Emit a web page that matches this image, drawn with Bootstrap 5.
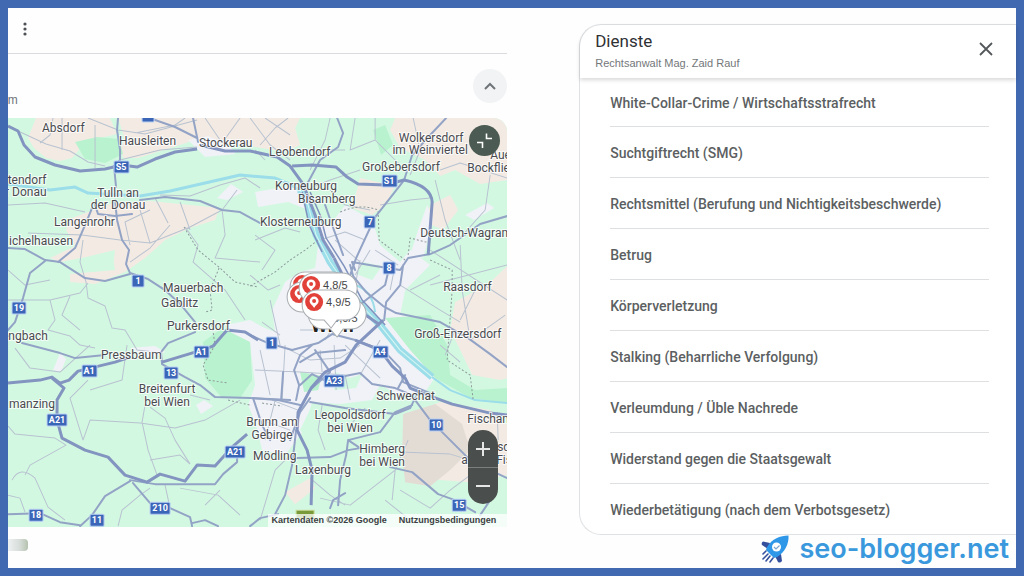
<!DOCTYPE html>
<html lang="de">
<head>
<meta charset="utf-8">
<meta name="viewport" content="width=device-width, initial-scale=1">
<title>Dienste – Rechtsanwalt Mag. Zaid Rauf</title>
<link href="https://cdn.jsdelivr.net/npm/bootstrap@5.3.0/dist/css/bootstrap.min.css" rel="stylesheet">
<style>
  body { font-family: Roboto, "Liberation Sans", sans-serif; color: #444746; }
  .frame { border: 8px solid #4169b1; min-height: 100vh; background: #fefefe; display: grid; grid-template-columns: 8fr 7fr; column-gap: 72px; }
  .frame > * { min-width: 0; }
  .topbar { height: 46px; border-bottom: 1px solid #d9dbde; padding-left: 7px; padding-bottom: 4px; }
  .subbar { height: 64px; }
  .plain-btn { border: 0; background: none; padding: 0; display: flex; align-items: center; justify-content: center; color: #5f6368; }
  .dots { width: 20px; height: 20px; }
  .host { font: 12px/16px "Liberation Sans", sans-serif; color: #70757a; margin: 38px 0 0 -7px; }
  .round { width: 34px; height: 34px; border-radius: 50%; background: #f1f3f4; margin-top: 15px; }
  .map-box { border-top-right-radius: 14px; background: #d3f8e2; }
  .map-box > svg { display: block; width: 100%; height: auto; }
  .shrink { top: 7px; right: 7px; width: 31px; height: 31px; border-radius: 50%; background: #4b5a52; }
  .zoomer { right: 9px; bottom: 23px; width: 30px; border-radius: 15px; background: #4a4e4c; }
  .zoomer button { width: 30px; height: 37px; }
  .zoomer button + button { border-top: 1px solid #7b7f7d; }
  .credits { right: 0; bottom: 0; padding: 0 11px 1px 4px; gap: 12px; background: rgba(255,255,255,.75); font: 700 9px/12px "Liberation Sans", sans-serif; color: #3c3f42; }
  .thumb { width: 20px; height: 12px; margin-top: 12px; border-radius: 0 4px 4px 0; background: linear-gradient(90deg, #eef1f2, #d5dcd8 60%, #b5c2ae); }
  .panel { margin-top: 16px; height: 511px; border: 1px solid #dfe1e3; border-right: 0; border-radius: 22px 0 0 22px; background: #fff; }
  .panel-head { flex: none; height: 53px; padding: 5px 20px 0 15px; box-shadow: 0 2px 4px rgba(0,0,0,.16); border-radius: 22px 0 0 0; }
  .panel-head h1 { font: 400 17px/23px Roboto, sans-serif; color: #303134; margin: 0; }
  .panel-head p { font: 11px/20px "Liberation Sans", sans-serif; color: #74777a; margin: 0; }
  .close-x { width: 20px; height: 20px; margin-top: 9px; }
  .services { margin: 0 27px 0 30px; }
  .services li { flex: 1 1 0; padding-top: 2px; display: flex; align-items: center; border-bottom: 1px solid #dedfe1; font: 500 14px/20px Roboto, sans-serif; color: #5c5f62; }
  .services li:first-child { flex: 0 0 49px; }
  .services li:last-child { border: 0; }
  .brand-link { height: 28px; padding-right: 7px; gap: 10px; font: 600 27px/28px Inter, sans-serif; color: #3a98dd; text-decoration: none; }
  .place { font: 12px Roboto, sans-serif; fill: #4a4b50; stroke: #fff; stroke-opacity: .75; stroke-width: 2px; paint-order: stroke; }
  .mid { text-anchor: middle; }
  .shield rect { fill: #3b66b8; stroke: #b9d0f3; stroke-width: 1px; }
  .shield text { font: 700 9px Roboto, sans-serif; fill: #fff; text-anchor: middle; }
  .rating { font: 11px "Liberation Sans", sans-serif; fill: #444; }
</style>
</head>
<body>
<div class="frame">
  <main class="d-flex flex-column">
    <div class="topbar d-flex align-items-center">
      <button class="plain-btn dots" aria-label="Mehr"><svg width="4" height="14" viewBox="0 0 4 14" fill="#4d5156"><circle cx="2" cy="2" r="1.6"/><circle cx="2" cy="7" r="1.6"/><circle cx="2" cy="12" r="1.6"/></svg></button>
    </div>
    <div class="subbar d-flex justify-content-between align-items-start overflow-hidden">
      <div class="host">om</div>
      <button class="plain-btn round" aria-label="Einklappen"><svg width="12" height="8" viewBox="0 0 12 8" fill="none" stroke="#707478" stroke-width="2"><path d="M1 7l5-5 5 5"/></svg></button>
    </div>
    <div class="map-box position-relative overflow-hidden">
      <svg viewBox="8 118 499 409" role="img" aria-label="Karte von Wien und Umgebung">
        <defs>
          <g id="marker">
            <path d="M15 0H43a14.500 14.500 0 0 1 0 30H35L29 38L22 30H15a14.500 14.500 0 0 1 0-30z" fill="#fff" stroke="#a9adb1"/>
            <circle cx="12" cy="12" r="9" fill="#e2413a"/>
            <path d="M12 6.500a4.500 4.500 0 0 1 4.500 4.500c0 3-3 4-4.500 7c-1.500-3-4.500-4-4.500-7a4.500 4.500 0 0 1 4.500-4.500z" fill="#fff"/>
            <circle cx="12" cy="11" r="2" fill="#e2413a"/>
          </g>
        </defs>
        <path fill="#d3f8e2" d="M8 118h499v409H8z"/>
        <!-- farmland -->
        <g fill="#f3ebe3">
          <path d="M36 118H110L117 134 100 138 82 146 72 158 60 161 46 158 34 148 28 138z"/>
          <path d="M118 118H300L295 128 300 145 285 152 250 146 215 143 195 140 170 148 138 158 124 158 118 150 125 140z"/>
          <path d="M72 218L110 204 150 201 220 208 215 220 190 228 165 240 145 258 125 272 95 284 70 282 70 274 115 270 112 252 60 262 50 258 75 246 66 230z"/>
          <path d="M395 118H507V180L480 184 455 170 440 176 425 160 400 148 390 130z"/>
          <path d="M360 178L395 186 385 205 372 215 352 208z"/>
          <path d="M507 266L488 284 455 302 450 330 460 350 472 375 500 380 507 378z"/>
          <path d="M410 414L440 402 490 410 507 425V475L470 482 440 480 405 470z"/>
          <path d="M430 205l20-10 8 15-15 20-18-8zM285 492l25-14 5 10-20 16z"/>
        </g>
        <path fill="#e3dcd5" d="M403 414L435 404 462 424 470 450 450 470 430 486 405 482 402 455z"/>
        <!-- city -->
        <g fill="#f0f2f7">
          <path d="M305 220L330 225 345 205 372 220 380 245 400 262 410 250 430 265 405 290 400 315 430 318 420 340 440 370 425 392 400 395 380 385 372 400 340 404 312 402 304 430 285 455 262 450 256 425 248 405 255 385 250 345 228 334 250 322 275 332 272 310 285 282 300 272 315 268 318 245z"/>
          <path d="M188 140l20-4 22 10 5 8-30 3zM255 192l35-6 22 12-4 12-20-8-30 5zM60 353l6 6-5 13-8-2zM196 405l8-5 9 6-12 8z"/>
          <path d="M225 325l25-5 18 10-10 8-20-4zM130 348l25-2 10 6-15 6zM217 198l14-14 12 8-16 8z"/>
          <path d="M410 255l8-25 9-25 6 15-10 38zM465 215l22-12 7 5-20 12zM415 355l10-4 6 8-8 5z"/>
        </g>
        <g fill="#b9f2ce">
          <path d="M203 342L222 328 250 342 252 380 240 398 222 398 205 378z"/>
          <path d="M385 318L430 315 447 345 450 375 475 390 507 388V403L470 398 435 378 410 350z"/>
          <path d="M75 142l22-5 22 2 4 15-18 9-20-4zM385 125l8 20-12 10-8-25z"/>
          <path d="M300 372l22 4-4 14-14 2zM336 295l-6-8 20 2z"/>
        </g>
        <path fill="#d3f8e2" d="M312 405L345 410 400 415 385 440 350 450 315 452 300 430zM90 256l25-6 -2 18-20 4zM335 372l15 6 12-4-6 14-22 2zM362 262l20 4-10 14-16-6zM436 255l40 6 4 22-34 15-30-10z"/>
        <!-- water -->
        <g fill="none" stroke-linejoin="round">
          <path stroke="#9bdde9" stroke-width="3" d="M8 184L50 190 75 187 88 193 140 196 170 191 205 183 240 175 275 178 290 184 302 192"/>
          <path stroke="#9bdde9" stroke-width="7" d="M300 190L308 205 316 235 330 262 356 300 380 325 400 350 432 377"/>
          <path stroke="#d8f7f2" stroke-width="1" d="M300 190L308 205 316 235 330 262 356 300 380 325 400 350 432 377"/>
          <path stroke="#9bdde9" stroke-width="2" d="M432 377L450 390 475 400 507 403M355 285Q372 290 375 312"/>
        </g>
        <!-- local roads -->
        <g fill="none" stroke="#b8c2d0" stroke-width="1" stroke-linejoin="round">
          <path d="M18 131L46 144 70 151 88 162 105 166M53 118L50 135 40 143M62 118V150M95 125V168M88 118L118 130 145 134 197 120M120 160L160 150 197 147M135 133L175 125 185 118M205 118L222 143 240 118M160 195L190 196 220 185 245 178 260 188"/>
          <path d="M8 205L45 203 85 212M28 233L82 235 120 240 150 243 190 227 222 210 237 190M83 240L80 262 86 282 88 298 105 306 112 328 125 330 137 350 155 352M130 245L125 222 150 210M155 198L168 223M180 202L190 230M150 243L140 210M130 262L150 248 170 225M185 227L198 245 193 262 225 290 245 320M222 210L225 235 215 258 260 262"/>
          <path d="M8 300L50 300 80 293 88 283M50 300L55 320 48 330 70 336 80 345 95 348M70 296L62 315 80 330M15 348L30 368 60 372 90 345M127 345L122 380 90 390M88 380L70 398 83 440M83 440L90 420 140 423 175 428 205 420 240 400M8 426L15 434 55 438 66 445 30 465 25 475M12 480Q20 465 35 478L48 507 65 520M118 526L122 510 140 495 150 488M145 405L142 422 148 450 157 475 M150 407L165 418 175 440 190 464M150 460L180 455 190 464M165 485L170 508M180 488L218 495 240 515M205 505L220 490"/>
          <path d="M8 495L20 498 25 512M210 400L190 395M250 118L270 145 290 160M265 118L290 135M260 145L275 128 288 118M330 118L325 140 310 170M305 150L345 150M355 118L350 150 375 140 375 118M375 140L400 165M360 170L330 180 305 190M413 118L420 150 410 175M435 180L445 220 460 260M490 175L485 210 458 240M440 170L460 163 507 178M330 190L345 205 370 210M380 205L410 200 430 198"/>
          <path d="M460 245L462 290 470 340M430 250L507 300M470 340L505 315M430 285L507 265M460 320L475 290M400 285L440 310 460 322M410 290L440 275M445 355L455 330M440 345L460 362"/>
          <path d="M262 322L280 335M270 300L280 345M260 350L270 395M255 370L300 372M285 345L282 400M290 350L310 360 340 358 360 345M300 372L345 375 350 400M320 350L322 372M334 345L336 390M345 345L380 378M380 340L360 375M360 260L352 300M370 250L355 275M335 240L360 262M320 240L345 232 365 240M390 290L395 265M375 250L398 265M300 330L325 330M340 315L325 340M330 310L350 330M272 400L298 410M262 420L290 430M275 400L265 440M322 405L318 430 325 450M365 408L350 425M408 440L395 470 392 500M400 452L450 454 470 460M385 500L410 520M395 470L350 505 320 498M310 478L330 495 345 505M260 520L275 470 290 455M400 490L430 508 450 490 490 460M497 412L498 440"/>
          <path d="M8 270L25 285 50 280M255 235L275 250 262 270M250 275L268 290 280 285M265 160L255 150M255 240L285 228 300 232"/>
        </g>
        <g fill="none" stroke="#8d9a9c" stroke-width="1" stroke-dasharray="2 2">
          <path d="M184 227L198 250 220 268 235 282 258 287M219 268L210 290 212 310 205 312M212 325L215 345 203 365 208 380 228 383M228 400L250 405M250 286L275 272 290 260 305 250 318 240M340 212Q360 203 378 210L379 240 405 260M408 255L410 238 430 243M430 260L452 270V290L447 360 470 375 473 400M262 403L282 406"/>
        </g>
        <!-- main roads -->
        <g fill="none" stroke="#93a3c6" stroke-width="2" stroke-linejoin="round" stroke-linecap="round">
          <path d="M118 118L117 130 120 150 120 160 114 166 116 187M155 120L175 127 197 138M193 118L198 142M92 208L85 225 75 248 58 262M8 248L25 249 45 260 60 262 85 278 105 281 130 274M45 261L30 273 23 298 15 322 8 330M95 205L98 214 115 216 132 214M140 200L165 197 200 201 222 210 240 212 260 223"/>
          <path d="M115 200L117 220 122 240 129 250 126 264 130 273 148 279 165 290 182 306 195 322M22 343L60 353 75 358 105 355M195 332L168 343 161 352 162 364 185 377 200 385 215 397 250 398 290 400"/>
          <path d="M130 480L155 484 215 484 223 474 237 462V452M130 481L105 496 92 515 80 526M8 514L40 513 60 522 80 525M133 483L150 503 170 508 190 517 192 526M192 523L205 520 218 526M250 526L260 518 278 514"/>
          <path d="M307 184L320 160 338 147 343 133 337 118M404 180L375 217 356 258 350 275M404 180L412 155 430 135 446 118M355 270L352 262 375 266 400 270 408 258 430 254 450 245 480 224 507 216M403 265L400 285 386 302 384 320M388 272L385 285 362 303M350 265L353 276 366 292 383 306 396 313 440 322 468 338 490 354 507 367"/>
          <path d="M325 205L332 225 343 255M250 335L268 343 292 350 318 343 332 334 355 340 383 350 400 368 403 382 430 393M296 400L299 385 294 370 300 355 312 345M300 362L315 353 345 350M300 385L312 374 328 382 345 376 360 373 372 384 395 388 412 395M253 398L278 400 300 405M290 440L300 412 310 398M283 372L281 400M398 388L405 375M315 350L330 372 312 388"/>
          <path d="M253 398L262 425 270 440M297 458L330 457 348 450 360 448 348 440 380 432 395 412 412 405M348 440L346 455 340 480 338 505M296 430L292 465 285 495 275 514M330 508L333 500 345 493M310 402L345 408 395 414 410 408 418 392M415 400L430 420 450 440 468 458 490 470M390 467L412 472 438 494 452 499 475 512M480 515L490 500M490 470L507 478"/>
        </g>
        <g fill="none" stroke="#8294bf" stroke-width="3" stroke-linejoin="round">
          <path d="M8 126L18 131 24 145 35 157 55 165 80 171 105 169 122 165 137 167 155 159 175 152 197 149M200 145L225 151 250 151 277 157 290 166 303 184 315 215 323 240 334 258"/>
          <path d="M292 166L312 165 336 167 347 177 358 184 385 185 404 180Q431 186 432 202L428 255"/>
          <path d="M8 383L40 380 52 377 60 383 69 380 78 371 115 362 130 357M162 362L195 352 213 346 227 330 245 332 258 340M52 378L64 388 57 400 57 420 62 438 85 450 108 457 125 475 147 482 160 474 185 481 197 465 215 466 232 447 247 434"/>
          <path d="M334 258L350 290 364 314 380 325M383 320L356 345 345 362 325 372 311 388 298 412 297 430 307 450 312 470 311 505M355 340L380 350 392 366 405 378 410 388 430 396 452 404 490 413 507 415"/>
        </g>
        <path fill="none" stroke="#7f91bd" stroke-width="1.500" d="M310 192L320 215 326 238 344 266 362 300 385 325M302 192L309 225 322 252"/>
        <!-- road shields -->
        <g class="shield">
          <rect x="142" y="110" width="12" height="12" rx="1"/>
          <rect x="114" y="161" width="15" height="12" rx="1"/><text x="121" y="170">S5</text>
          <rect x="382" y="175" width="15" height="12" rx="1"/><text x="389" y="184">S1</text>
          <rect x="364" y="216" width="11" height="12" rx="1"/><text x="370" y="225">7</text>
          <rect x="132" y="275" width="12" height="12" rx="1"/><text x="138" y="284">1</text>
          <rect x="383" y="262" width="12" height="12" rx="1"/><text x="389" y="271">8</text>
          <rect x="12" y="302" width="14" height="12" rx="1"/><text x="19" y="311">19</text>
          <rect x="194" y="346" width="15" height="12" rx="1"/><text x="201" y="355">A1</text>
          <rect x="82" y="365" width="15" height="12" rx="1"/><text x="89" y="374">A1</text>
          <rect x="164" y="367" width="14" height="12" rx="1"/><text x="171" y="376">13</text>
          <rect x="266" y="337" width="11" height="12" rx="1"/><text x="272" y="346">1</text>
          <rect x="373" y="346" width="15" height="12" rx="1"/><text x="380" y="355">A4</text>
          <rect x="324" y="375" width="20" height="12" rx="1"/><text x="334" y="384">A23</text>
          <rect x="47" y="414" width="20" height="12" rx="1"/><text x="57" y="423">A21</text>
          <rect x="225" y="446" width="20" height="12" rx="1"/><text x="235" y="455">A21</text>
          <rect x="429" y="419" width="14" height="12" rx="1"/><text x="436" y="428">10</text>
          <rect x="29" y="509" width="14" height="12" rx="1"/><text x="36" y="518">18</text>
          <rect x="90" y="514" width="14" height="12" rx="1"/><text x="97" y="523">11</text>
          <rect x="150" y="502" width="20" height="12" rx="1"/><text x="160" y="511">210</text>
          <rect x="452" y="499" width="14" height="12" rx="1"/><text x="459" y="508">15</text>
        </g>
        <path d="M296 510h18v8h-18z" fill="#7a9a3a" stroke="#c9dc9a"/>
        <!-- place names -->
        <g class="place">
          <text x="42" y="132">Absdorf</text><text x="119" y="145">Hausleiten</text><text x="199" y="147">Stockerau</text>
          <text x="269" y="156">Leobendorf</text><text x="275" y="190">Korneuburg</text><text x="298" y="203">Bisamberg</text>
          <text x="260" y="226">Klosterneuburg</text><text x="362" y="171">Großebersdorf</text>
          <text class="mid" x="431" y="142">Wolkersdorf</text><text class="mid" x="430" y="154">im Weinviertel</text>
          <text x="490" y="159">Aue</text><text x="467" y="172">Bockflie</text><text x="420" y="237">Deutsch-Wagram</text>
          <text x="1" y="184">ntendorf</text><text x="5" y="196">r Donau</text>
          <text class="mid" x="118" y="197">Tulln an</text><text class="mid" x="118" y="209">der Donau</text>
          <text x="54" y="226">Langenrohr</text><text x="9" y="245">ichelhausen</text>
          <text x="163" y="292">Mauerbach</text><text x="161" y="307">Gablitz</text><text x="167" y="330">Purkersdorf</text>
          <text x="2" y="340">engbach</text><text x="101" y="359">Pressbaum</text>
          <text class="mid" x="167" y="393">Breitenfurt</text><text class="mid" x="167" y="406">bei Wien</text>
          <text x="9" y="408">manzing</text><text x="443" y="291">Raasdorf</text><text x="414" y="338">Groß-Enzersdorf</text>
          <text x="376" y="400">Schwechat</text><text class="mid" x="350" y="419">Leopoldsdorf</text><text class="mid" x="350" y="432">bei Wien</text>
          <text class="mid" x="272" y="426">Brunn am</text><text class="mid" x="272" y="439">Gebirge</text>
          <text x="253" y="460">Mödling</text><text x="295" y="474">Laxenburg</text>
          <text class="mid" x="382" y="453">Himberg</text><text class="mid" x="382" y="466">bei Wien</text>
          <text x="467" y="423">Fischam</text><text x="497" y="451">sd</text><text x="461" y="464">a</text><text x="496" y="464">Fis</text>
          <text x="311" y="332" style="font-size:19px;font-weight:700;fill:#222">Wien</text>
        </g>
        <!-- rated offices -->
        <use href="#marker" x="290" y="272"/>
        <use href="#marker" x="287" y="282"/>
        <use href="#marker" x="308" y="299"/><text class="rating" x="333" y="322">5,0/5</text>
        <use href="#marker" x="299" y="273"/><text class="rating" x="323" y="289">4,8/5</text>
        <use href="#marker" x="302" y="290"/><text class="rating" x="326" y="306">4,9/5</text>
      </svg>
      <button class="plain-btn shrink position-absolute" aria-label="Karte verkleinern"><svg width="17" height="17" viewBox="0 0 17 17" fill="none" stroke="#fff" stroke-width="1.600"><path d="M10.500 1.500v5H16M1 10.500h5.500V16"/></svg></button>
      <div class="zoomer position-absolute overflow-hidden">
        <button class="plain-btn" aria-label="Vergrößern"><svg width="14" height="14" viewBox="0 0 14 14" stroke="#e6e6e6" stroke-width="2"><path d="M0 7h14M7 0v14"/></svg></button>
        <button class="plain-btn" aria-label="Verkleinern"><svg width="14" height="14" viewBox="0 0 14 14" stroke="#e6e6e6" stroke-width="2"><path d="M0 7h14"/></svg></button>
      </div>
      <div class="credits position-absolute d-flex"><span>Kartendaten ©2026 Google</span><a href="#" class="text-reset text-decoration-none">Nutzungsbedingungen</a></div>
    </div>
    <div class="thumb"></div>
  </main>

  <aside class="d-flex flex-column">
    <section class="panel d-flex flex-column">
      <header class="panel-head d-flex justify-content-between align-items-start">
        <div><h1>Dienste</h1><p>Rechtsanwalt Mag. Zaid Rauf</p></div>
        <button class="plain-btn close-x" aria-label="Schließen"><svg width="14" height="14" viewBox="0 0 14 14" stroke="#55585b" stroke-width="1.800"><path d="M1 1l12 12M13 1L1 13"/></svg></button>
      </header>
      <ul class="services list-unstyled d-flex flex-column flex-grow-1">
        <li>White-Collar-Crime / Wirtschaftsstrafrecht</li>
        <li>Suchtgiftrecht (SMG)</li>
        <li>Rechtsmittel (Berufung und Nichtigkeitsbeschwerde)</li>
        <li>Betrug</li>
        <li>Körperverletzung</li>
        <li>Stalking (Beharrliche Verfolgung)</li>
        <li>Verleumdung / Üble Nachrede</li>
        <li>Widerstand gegen die Staatsgewalt</li>
        <li>Wiederbetätigung (nach dem Verbotsgesetz)</li>
      </ul>
    </section>
    <a class="brand-link d-flex align-items-center justify-content-end" href="#">
      <svg width="28" height="28" viewBox="0 0 28 28" aria-hidden="true">
        <path d="M9 8L2 6.500Q0 8 1 10L7 14zM20 19L21 26Q19 28.500 17 27L14 21z" fill="#34509c"/>
        <path d="M27.500 .500C19 .500 11 4 6 12L5 15 13 23 16 22C24 17 28 9 27.500 .500z" fill="#2f97e8"/>
        <circle cx="15.500" cy="12" r="4.500" fill="#fff"/>
        <path d="M13 12l2 2 3.500-3.500" fill="none" stroke="#7ba6cf" stroke-width="1.200"/>
        <path d="M5 16l-3 3M7 19l-5 5M9 21l-4 5M12 23l-3 4" stroke="#34509c" stroke-width="1.600" stroke-linecap="round"/>
      </svg>
      <span>seo-blogger.net</span>
    </a>
  </aside>
</div>
<script src="https://cdn.jsdelivr.net/npm/bootstrap@5.3.0/dist/js/bootstrap.bundle.min.js"></script>
</body>
</html>
